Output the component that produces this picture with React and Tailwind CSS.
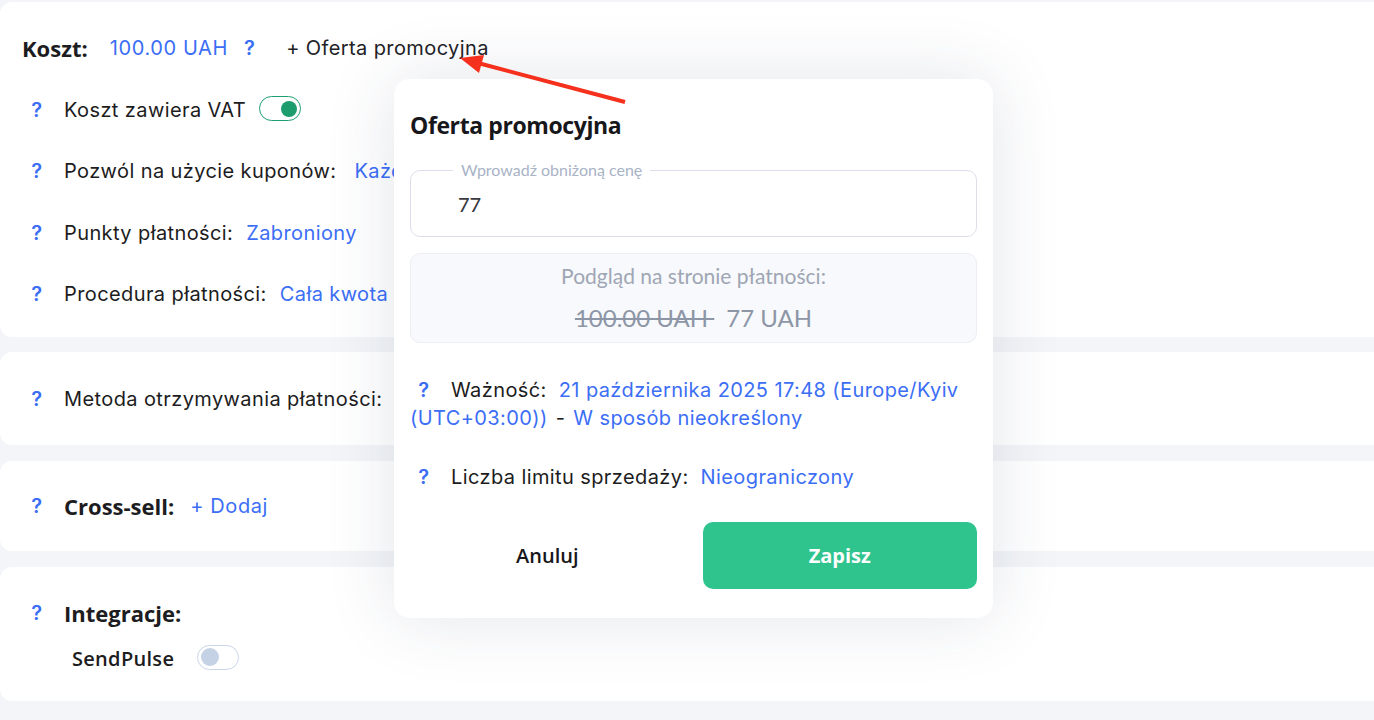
import React from "react";

function Q({ className = "" }) {
  return (
    <span className={"inline-block w-[30px] text-center font-semibold text-[#3b6ef5] " + className}>?</span>
  );
}

function Toggle({ on }) {
  return (
    <span
      className={
        "inline-flex h-[25px] w-[42px] items-center rounded-full border-[1.5px] bg-white px-[3px] " +
        (on ? "justify-end border-[#1f9e70]" : "justify-start border-[#c9d6ea]")
      }
    >
      <span className={on ? "h-[16px] w-[16px] rounded-full bg-[#1d9c6e]" : "h-[18px] w-[18px] rounded-full bg-[#c5d2e5]"} />
    </span>
  );
}

function Row({ label, value, gap = "ml-[12px]" }) {
  return (
    <div className="flex h-[40px] items-center">
      <Q />
      <span className="ml-[12px]">{label}</span>
      {value && <span className={gap + " text-[#3b6ef5]"}>{value}</span>}
    </div>
  );
}

export default function App() {
  return (
    <div className="relative min-h-[720px] w-full overflow-hidden bg-[#f3f5f8] font-['Inter',sans-serif] text-[20px] tracking-[0.4px] text-[#1c1c21]">
      <div className="-mr-6 flex flex-col pt-[2px]">
        {/* price card */}
        <section className="flex flex-col gap-[21.5px] rounded-xl bg-white pt-[26px] pb-[23px] pl-[22px]">
          <div className="flex h-[40px] items-center">
            <span className="font-['Open_Sans',sans-serif] text-[22px] font-bold tracking-normal">Koszt:</span>
            <span className="ml-[22px] tracking-[0.6px] text-[#3b6ef5]">100.00 UAH</span>
            <span className="ml-[16px] font-semibold text-[#3b6ef5]">?</span>
            <span className="ml-[31px] text-[#222226]">+ Oferta promocyjna</span>
          </div>
          <div className="flex h-[40px] items-center">
            <Q />
            <span className="ml-[12px]">Koszt zawiera VAT</span>
            <span className="ml-[13px]"><Toggle on /></span>
          </div>
          <Row label="Pozwól na użycie kuponów:" value="Każdy" gap="ml-[18px]" />
          <Row label="Punkty płatności:" value="Zabroniony" gap="ml-[13px]" />
          <Row label="Procedura płatności:" value="Cała kwota" gap="ml-[13px]" />
        </section>

        <section className="mt-[15px] flex h-[93px] items-center rounded-xl bg-white pl-[22px]">
          <Q />
          <span className="ml-[12px]">Metoda otrzymywania płatności:</span>
        </section>

        <section className="mt-[16px] flex h-[90px] items-center rounded-xl bg-white pl-[22px]">
          <Q />
          <span className="ml-[12px] font-['Open_Sans',sans-serif] text-[22px] font-bold tracking-normal">Cross-sell:</span>
          <span className="ml-[16px] tracking-[0.6px] text-[#3b6ef5]">+ Dodaj</span>
        </section>

        <section className="mt-[16px] flex h-[134px] flex-col rounded-xl bg-white pt-[26px] pl-[22px]">
          <div className="flex h-[40px] items-center">
            <Q />
            <span className="ml-[12px] font-['Open_Sans',sans-serif] text-[22px] font-bold tracking-normal">Integracje:</span>
          </div>
          <div className="mt-[11px] flex h-[30px] items-center pl-[50px]">
            <span className="font-['Open_Sans',sans-serif] text-[20px] font-semibold tracking-[0.3px]">SendPulse</span>
            <span className="ml-[23px]"><Toggle /></span>
          </div>
        </section>
      </div>

      {/* promo offer popup */}
      <div className="absolute left-[394px] top-[79px] flex h-[539px] w-[599px] flex-col rounded-[16px] bg-white px-[16px] pt-[29px] shadow-[0_0_70px_rgba(40,55,90,0.13)]">
        <h2 className="font-['Open_Sans',sans-serif] text-[23px] font-bold leading-[34px] tracking-[-0.4px] text-[#17171b]">Oferta promocyjna</h2>

        <fieldset className="mt-[19px] h-[76px] rounded-[10px] border border-[#dcdfeb] font-['Lato',sans-serif] tracking-normal">
          <legend className="ml-[42px] px-[8px] text-[16px] leading-[18px] text-[#a9b3c6]">Wprowadź obniżoną cenę</legend>
          <div className="flex h-[50px] items-center pl-[47px] text-[20px] font-medium text-[#3a3a3f]">77</div>
        </fieldset>

        <div className="mt-[16px] flex h-[90px] flex-col items-center justify-center gap-[14px] rounded-[10px] border border-[#eceef3] bg-[#f8f9fc] font-['Lato',sans-serif] tracking-normal text-[#9ea6b4]">
          <div className="text-[21px] leading-[26px]">Podgląd na stronie płatności:</div>
          <div className="text-[24px] leading-[30px] text-[#8d96a6]">
            <span className="line-through">100.00 UAH </span>
            <span className="ml-[12px]">77 UAH</span>
          </div>
        </div>

        <p className="mt-[33px] leading-[28px]">
          <span className="inline-block w-[28px] text-center font-semibold text-[#3b6ef5]">?</span>
          <span className="ml-[13px]">Ważność:</span>
          <span className="ml-[12px] text-[#3b6ef5]">21 października 2025 17:48 (Europe/Kyiv</span>{" "}
          <span className="text-[#3b6ef5]">(UTC+03:00))</span>
          <span className="ml-[8px] mr-[8px]">-</span>
          <span className="text-[#3b6ef5]">W sposób nieokreślony</span>
        </p>

        <p className="mt-[31px] leading-[28px]">
          <span className="inline-block w-[28px] text-center font-semibold text-[#3b6ef5]">?</span>
          <span className="ml-[13px]">Liczba limitu sprzedaży:</span>
          <span className="ml-[12px] text-[#3b6ef5]">Nieograniczony</span>
        </p>

        <div className="mt-[31px] grid grid-cols-2 gap-[18px] font-['Open_Sans',sans-serif] tracking-normal">
          <button className="h-[67px] text-[20px] font-semibold text-[#17171b]">Anuluj</button>
          <button className="h-[67px] rounded-[10px] bg-[#2fc48d] text-[20px] font-bold text-white">Zapisz</button>
        </div>
      </div>

      {/* annotation arrow */}
      <svg className="pointer-events-none absolute left-0 top-0" width="1374" height="720">
        <line x1="625" y1="102" x2="478" y2="63" stroke="#f5301c" strokeWidth="4" />
        <polygon points="460,58 479,73 484,55" fill="#f5301c" />
      </svg>
    </div>
  );
}
